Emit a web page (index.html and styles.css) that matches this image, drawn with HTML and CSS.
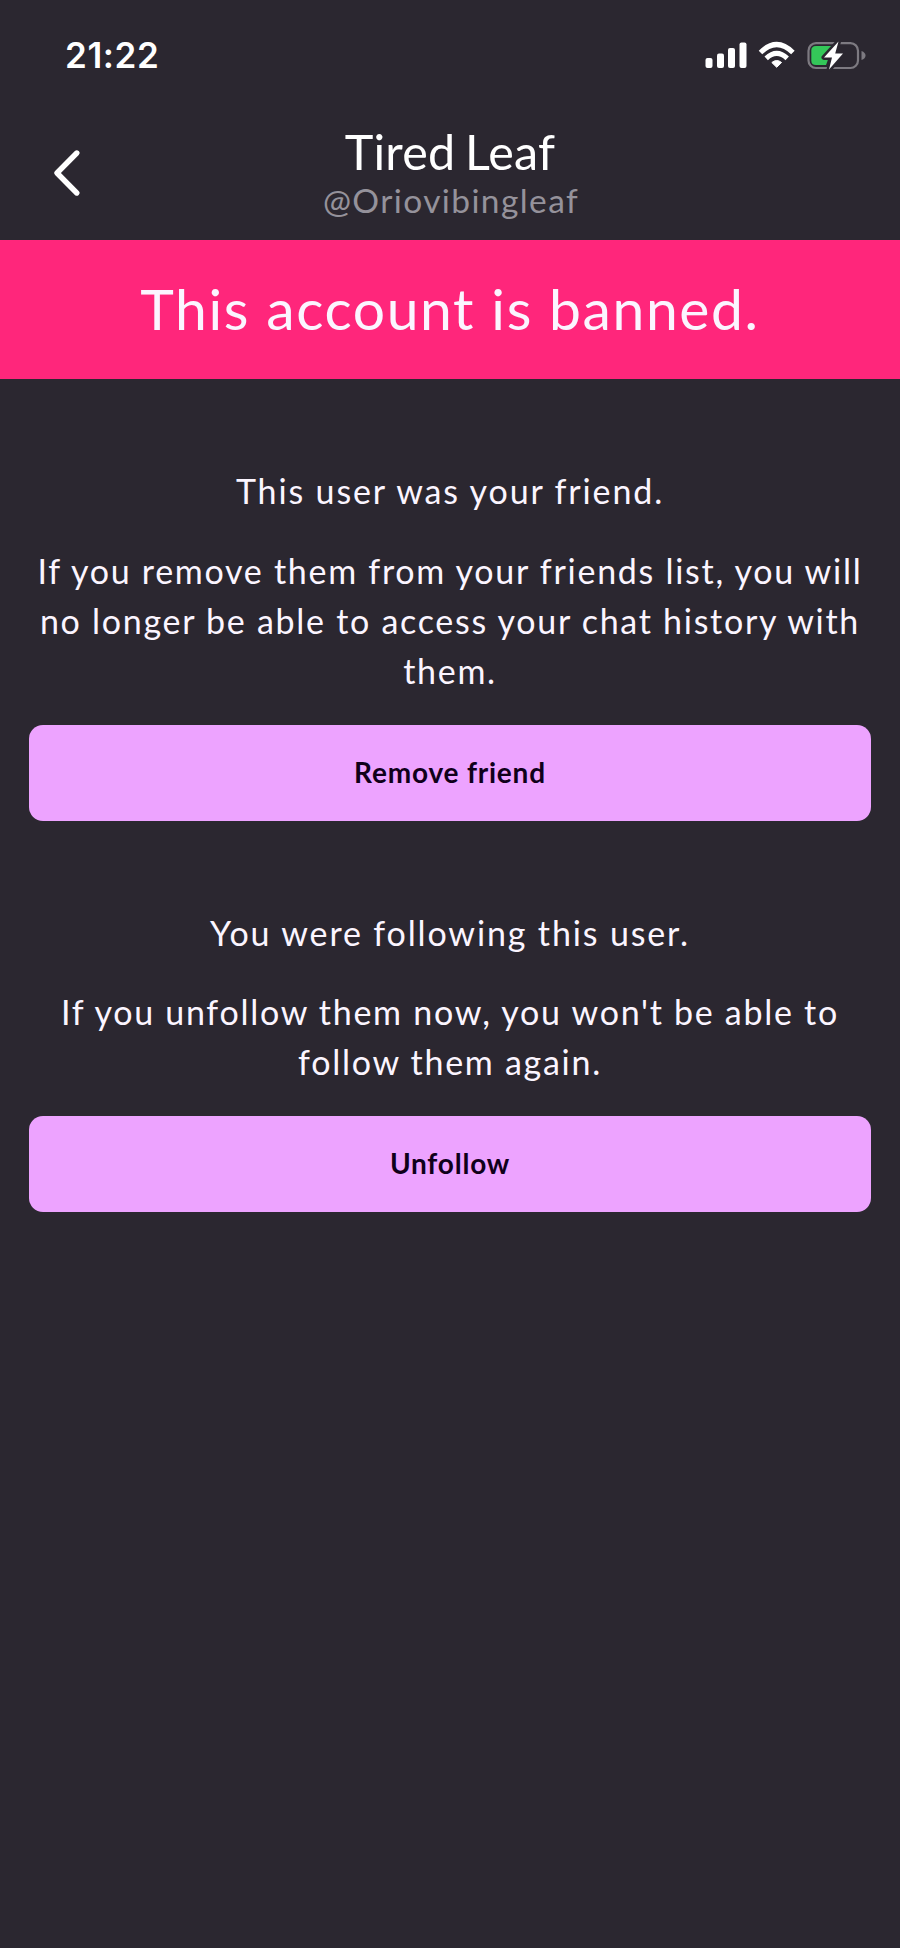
FILE: index.html
```
<!DOCTYPE html>
<html lang="en">
<head>
<meta charset="utf-8">
<title>Tired Leaf</title>
<link rel="stylesheet" href="styles.css">
</head>
<body>
<div class="status">
  <span class="time">21:22</span>
  <svg class="indicators" width="162" height="32" viewBox="704 40 162 32">
    <g fill="#fff">
      <rect x="705.5" y="58" width="7" height="10" rx="2"/>
      <rect x="717" y="53.500" width="7" height="14.500" rx="2"/>
      <rect x="728" y="48" width="7" height="20" rx="2"/>
      <rect x="739.500" y="42.500" width="7" height="25.500" rx="2"/>
      <path d="M776.700 67.300 L771.800 62.500 Q776.700 58.500 781.600 62.500 Z" stroke="#fff" stroke-width="1" stroke-linejoin="round"/>
    </g>
    <g fill="none" stroke="#fff" stroke-width="5">
      <path d="M760.500 52.500 Q776.700 36.500 792.900 52.500"/>
      <path d="M766.200 58.300 Q776.700 48.500 787.200 58.300"/>
    </g>
    <rect x="808.500" y="43.200" width="49.500" height="24.800" rx="7.500" fill="none" stroke="#7d7a81" stroke-width="2.200"/>
    <path d="M861.500 51 Q865.500 52.500 865.500 55.500 Q865.500 58.500 861.500 60 Z" fill="#7d7a81"/>
    <path d="M816 46 H833 L826 65 H816 Q811.300 65 811.300 60.500 V50.500 Q811.300 46 816 46 Z" fill="#34c759"/>
    <path d="M838.500 41.500 L824 57.500 H832 L829 69.500 L843 53.500 H835.200 Z" fill="#fff" stroke="#2b2730" stroke-width="5" paint-order="stroke" stroke-linejoin="round"/>
  </svg>
</div>
<header class="header">
  <svg class="back" width="32" height="50" viewBox="0 0 32 50"><path d="M25.800 5 L6 25 L25.800 45" fill="none" stroke="#fff" stroke-width="5.400" stroke-linecap="round" stroke-linejoin="round"/></svg>
  <div class="names">
    <h1 class="title">Tired Leaf</h1>
    <p class="handle">@Oriovibingleaf</p>
  </div>
</header>
<div class="banner"><p class="banner-text">This account is banned.</p></div>
<main class="content">
  <section class="block">
    <p class="text lead">This user was your friend.</p>
    <p class="text">If you remove them from your friends list, you will<br>no longer be able to access your chat history with<br>them.</p>
    <button class="button">Remove friend</button>
  </section>
  <section class="block">
    <p class="text lead">You were following this user.</p>
    <p class="text">If you unfollow them now, you won't be able to<br>follow them again.</p>
    <button class="button">Unfollow</button>
  </section>
</main>
</body>
</html>
```

FILE: styles.css
```
* { box-sizing: border-box; margin: 0; padding: 0; }
body { background: #2b2730; color: #fbf5ff; font-family: Lato, sans-serif; min-height: 1948px; }
.status { display: flex; justify-content: space-between; align-items: center; height: 112px; padding: 0 34px 0 65px; }
.time { font: 600 35px/40px Inter, sans-serif; color: #fff; letter-spacing: 0.6px; padding-bottom: 2px; }
.indicators { display: block; }
.header { display: grid; grid-template-columns: 100px 1fr 100px; height: 128px; }
.back { margin: 36px 0 0 51px; }
.names { text-align: center; }
.title { font-weight: 400; font-size: 48.5px; line-height: 60px; letter-spacing: 0.2px; word-spacing: -3px; margin-top: 9px; color: #fff; }
.handle { font-size: 33.5px; line-height: 38px; letter-spacing: 1.4px; color: #95929b; padding-left: 2px; }
.banner { height: 139px; background: #ff267b; display: flex; justify-content: center; align-items: center; padding-bottom: 4px; }
.banner-text { font-size: 57px; line-height: 68px; letter-spacing: 1.6px; }
.content { padding: 87px 29px 0; }
.block { display: flex; flex-direction: column; margin-bottom: 87px; }
.text { font-size: 34px; line-height: 50px; letter-spacing: 1.72px; text-align: center; margin-bottom: 29px; white-space: nowrap; }
.lead { letter-spacing: 1.86px; margin-bottom: 29.500px; }
.button { height: 96px; border: 0; border-radius: 14px; background: #eda3ff; color: #10001a; font: 700 28px Lato, sans-serif; letter-spacing: 0.8px; padding-bottom: 2px; }
```
